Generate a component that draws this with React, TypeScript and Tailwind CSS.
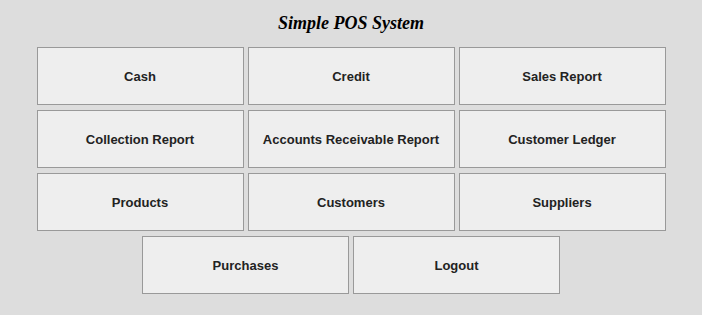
const rows: string[][] = [
  ["Cash", "Credit", "Sales Report"],
  ["Collection Report", "Accounts Receivable Report", "Customer Ledger"],
  ["Products", "Customers", "Suppliers"],
];

function MenuButton({ label }: { label: string }) {
  return (
    <button className="w-[207px] h-[58px] pt-[2px] bg-[#eeeeee] border border-[#999999] text-[13px] font-bold text-[#222222] flex items-center justify-center">
      {label}
    </button>
  );
}

export default function App() {
  return (
    <div className="w-[702px] h-[315px] bg-[#dddddd] flex flex-col items-center" style={{ fontFamily: '"Liberation Sans", Arial, sans-serif' }}>
      {/* title */}
      <h1
        className="mt-[11px] h-[24px] leading-[24px] text-[18px] font-bold italic text-black"
        style={{ fontFamily: '"Liberation Serif", "Times New Roman", serif' }}
      >
        Simple POS System
      </h1>

      {/* menu grid */}
      <div className="mt-[12px] flex flex-col items-center gap-y-[5px]">
        {rows.map((row, i) => (
          <div key={i} className="flex gap-x-[4px]">
            {row.map((label) => (
              <MenuButton key={label} label={label} />
            ))}
          </div>
        ))}
        <div className="flex gap-x-[4px]">
          <MenuButton label="Purchases" />
          <MenuButton label="Logout" />
        </div>
      </div>
    </div>
  );
}
